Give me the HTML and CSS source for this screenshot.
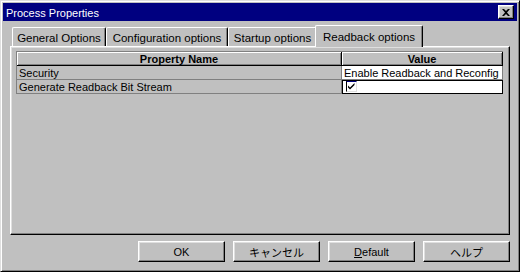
FILE: index.html
```html
<!DOCTYPE html>
<html>
<head>
<meta charset="utf-8">
<link rel="stylesheet" href="styles.css">
</head>
<body>
<div class="window">
  <div class="titlebar">
    <span class="title">Process Properties</span>
    <div class="close">
      <svg width="8" height="7" viewBox="0 0 8 7"><path d="M0 0h2l2 2 2-2h2L5 3.5 8 7H6L4 5 2 7H0l3-3.5z" fill="#000"/></svg>
    </div>
  </div>
  <div class="content">
    <div class="tabs">
      <div class="tab t1">General Options</div>
      <div class="tab t2">Configuration options</div>
      <div class="tab t3">Startup options</div>
      <div class="tab t4 active">Readback options</div>
    </div>
    <div class="panel">
      <div class="grid">
        <div class="hcell">Property Name</div>
        <div class="hcell">Value</div>
        <div class="cell">Security</div>
        <div class="cell val">Enable Readback and Reconfig</div>
        <div class="cell">Generate Readback Bit Stream</div>
        <div class="cell val edit">
          <div class="check">
            <svg width="9" height="9" viewBox="0 0 9 9"><path d="M1 3.5l2 2 4.5-4.5v2L3 7.5l-2-2z" fill="#000"/></svg>
          </div>
        </div>
      </div>
    </div>
    <div class="buttons">
      <div class="btn">OK</div>
      <div class="btn jp">キャンセル</div>
      <div class="btn"><span class="u">D</span>efault</div>
      <div class="btn jp">ヘルプ</div>
    </div>
  </div>
</div>
</body>
</html>
```

FILE: styles.css
```css
* { box-sizing: border-box; }
html, body { margin: 0; padding: 0; }
body {
  width: 520px;
  height: 272px;
  background: #c0c0c0;
  font-family: "Liberation Sans", Arial, sans-serif;
  font-size: 11px;
  color: #000;
  overflow: hidden;
}
.window {
  width: 520px;
  height: 272px;
  background: #c0c0c0;
  border: 1px solid;
  border-color: #dfdfdf #000 #000 #dfdfdf;
  box-shadow: inset 1px 1px #fff, inset -1px -1px #808080;
  padding: 2px;
  display: flex;
  flex-direction: column;
}
.titlebar {
  height: 18px;
  background: #000080;
  color: #fff;
  display: flex;
  align-items: flex-start;
  justify-content: space-between;
  padding-left: 3px;
  padding-right: 3px;
}
.title {
  line-height: 16px;
  padding-top: 2px;
  font-size: 11px;
}
.close {
  width: 16px;
  height: 14px;
  margin-top: 2px;
  background: #c0c0c0;
  border: 1px solid;
  border-color: #fff #000 #000 #fff;
  box-shadow: inset -1px -1px #808080, inset 1px 1px #dfdfdf;
  display: flex;
  align-items: center;
  justify-content: center;
}
.close svg { display: block; margin-left: 0; }
.content {
  flex: 1;
  padding: 4px 7px 0 7px;
  display: flex;
  flex-direction: column;
}
.tabs {
  height: 21px;
  display: flex;
  align-items: flex-end;
  padding-left: 2px;
  position: relative;
  z-index: 1;
}
.tab {
  height: 19px;
  background: #c0c0c0;
  border-top: 1px solid #fff;
  border-left: 1px solid #fff;
  border-right: 1px solid #000;
  box-shadow: inset -1px 0 #808080;
  border-radius: 2px 2px 0 0;
  text-align: center;
  padding-top: 4px;
  line-height: 13px;
  font-size: 11.5px;
  white-space: nowrap;
}
.t1 { width: 94px; }
.t2 { width: 122px; }
.t3 { width: 89px; }
.t4 { width: 108px; }
.tab.active {
  height: 22px;
  margin-left: -2px;
  margin-bottom: -1px;
  padding-top: 5px;
}
.panel {
  width: 500px;
  height: 189px;
  border: 1px solid;
  border-color: #fff #000 #000 #fff;
  box-shadow: inset -1px -1px #808080, inset 1px 1px #dfdfdf;
  padding: 4px 0 0 5px;
}
.grid {
  width: 487px;
  display: grid;
  grid-template-columns: 325px 161px;
  border-top: 1px solid #808080;
  border-left: 1px solid #808080;
}
.hcell {
  height: 14px;
  border-right: 1px solid #000;
  border-bottom: 1px solid #000;
  box-shadow: inset 1px 1px #fff, inset -1px -1px #808080;
  font-weight: bold;
  text-align: center;
  line-height: 12px;
  padding-top: 1px;
}
.cell {
  height: 14px;
  border-right: 1px solid #808080;
  border-bottom: 1px solid #808080;
  line-height: 12px;
  padding-left: 2px;
  padding-top: 1px;
  white-space: nowrap;
  overflow: hidden;
}
.val { background: #fff; padding-left: 2px; }
.edit {
  border-right-color: #000;
  border-bottom-color: #000;
  box-shadow: inset 1px 1px #000;
  padding: 1px 0 0 4px;
}
.check {
  width: 11px;
  height: 11px;
  background: #fff;
  border: 1px solid;
  border-color: #000080 #dfdfdf #dfdfdf #000;
  display: flex;
  align-items: center;
  justify-content: center;
}
.check svg { display: block; }
.buttons {
  display: flex;
  justify-content: flex-end;
  gap: 8px;
  margin-top: 6px;
}
.btn {
  width: 87px;
  height: 21px;
  border: 1px solid;
  border-color: #fff #000 #000 #fff;
  box-shadow: inset -1px -1px #808080, inset 1px 1px #dfdfdf;
  display: flex;
  align-items: center;
  justify-content: center;
  font-size: 11px;
}
.jp { font-family: "Noto Sans CJK JP", sans-serif; font-size: 11px; }
.u { text-decoration: underline; }
```
